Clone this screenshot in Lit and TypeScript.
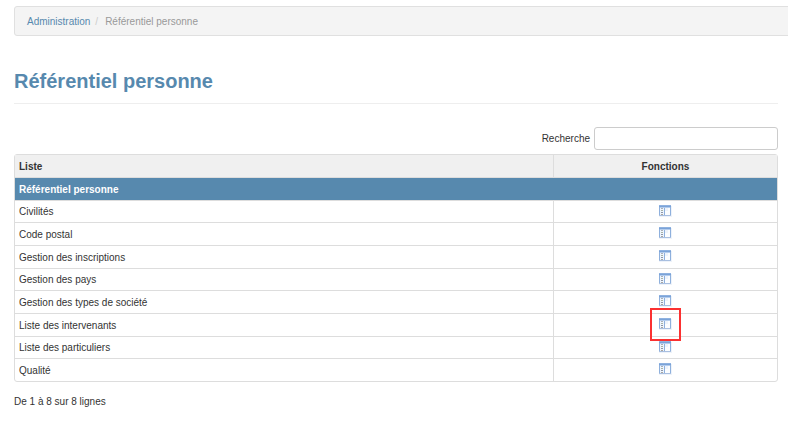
import { LitElement, html, css, nothing } from "lit";
import { customElement, state } from "lit/decorators.js";

interface Entry {
  name: string;
  marked?: boolean;
}

const ENTRIES: Entry[] = [
  { name: "Civilités" },
  { name: "Code postal" },
  { name: "Gestion des inscriptions" },
  { name: "Gestion des pays" },
  { name: "Gestion des types de société" },
  { name: "Liste des intervenants", marked: true },
  { name: "Liste des particuliers" },
  { name: "Qualité" },
];

@customElement("panel-icon")
export class PanelIcon extends LitElement {
  static styles = css`
    :host,
    svg {
      display: block;
    }
  `;

  render() {
    return html`
      <svg width="14" height="12" viewBox="0 0 14 12" aria-hidden="true" shape-rendering="crispEdges">
        <rect x="0" y="1" width="13" height="11" fill="#eef3fa" />
        <rect x="0" y="0" width="12" height="11" fill="#8eb0dd" />
        <rect x="0" y="0" width="12" height="1" fill="#8fb2e0" />
        <rect x="0" y="1" width="12" height="1" fill="#7ba3d8" />
        <rect x="1" y="2" width="10" height="1" fill="#b4cdee" />
        <rect x="1" y="3" width="4" height="7" fill="#edf4fc" />
        <rect x="2" y="3" width="2" height="1" fill="#a9afb8" />
        <rect x="2" y="5" width="2" height="1" fill="#a8b3a6" />
        <rect x="2" y="7" width="2" height="1" fill="#8d96a8" />
        <rect x="2" y="9" width="2" height="1" fill="#a9a6a0" />
        <rect x="6" y="3" width="5" height="7" fill="#fbfdff" />
        <rect x="6" y="3" width="3" height="3" fill="#edf3fb" />
        <rect x="0" y="10" width="12" height="1" fill="#a9bfe0" />
      </svg>
    `;
  }
}

@customElement("app-root")
export class AppRoot extends LitElement {
  static styles = css`
    :host {
      display: block;
      overflow-x: hidden;
      padding: 6px 10px 12px 14px;
      background: #fff;
      color: #333;
      font: 10px/14px "Liberation Sans", Arial, sans-serif;
    }
    .breadcrumb {
      display: flex;
      margin: 0 -20px 0 0;
      padding: 8px 12px 6px;
      list-style: none;
      background: #f4f4f4;
      border: 1px solid #e0e0e0;
      border-radius: 3px;
      color: #999;
    }
    .breadcrumb li + li::before {
      content: "/";
      padding: 0 7px 0 5px;
      color: #ccc;
    }
    .link {
      color: #5789ae;
      text-decoration: none;
    }
    .title {
      margin: 33px 0 23px;
      padding-bottom: 10px;
      border-bottom: 1px solid #eee;
      color: #5789ae;
      font-size: 20px;
      line-height: 24px;
    }
    .search {
      display: flex;
      justify-content: flex-end;
      align-items: center;
      gap: 4px;
      margin-bottom: 4px;
    }
    .field {
      box-sizing: border-box;
      width: 184px;
      height: 23px;
      padding: 2px 6px;
      border: 1px solid #ccc;
      border-radius: 3px;
      font: inherit;
      color: inherit;
    }
    .frame {
      border: 1px solid #ddd;
      border-radius: 3px;
    }
    .list {
      width: 100%;
      border-spacing: 0;
      table-layout: fixed;
    }
    th,
    td {
      box-sizing: border-box;
      height: 23px;
      padding: 1px 4px 0;
      text-align: left;
      border-bottom: 1px solid #ddd;
    }
    .row:nth-child(3n + 2) td {
      height: 22px;
    }
    .row:last-child td {
      height: 22px;
      border-bottom: 0;
    }
    .head th {
      padding-top: 2px;
      background: #f0f0f0;
    }
    .group th {
      background: #5789ae;
      color: #fff;
    }
    .actions {
      width: 224px;
      border-left: 1px solid #ddd;
    }
    .head .actions {
      text-align: center;
    }
    .row .actions {
      padding: 0 4px 2px;
    }
    .open {
      position: relative;
      display: block;
      margin: 0 auto;
      padding: 0;
      border: 0;
      background: none;
      cursor: pointer;
    }
    .mark {
      position: absolute;
      inset: -10px -8px -11px -9px;
      border: 2px solid #fb3131;
      z-index: 1;
    }
    .count {
      margin: 13px 0 0;
    }
  `;

  @state() private query = "";

  private onSearch(e: Event) {
    this.query = (e.target as HTMLInputElement).value;
  }

  render() {
    const q = this.query.toLowerCase();
    const rows = ENTRIES.filter((r) => r.name.toLowerCase().includes(q));
    return html`
      <nav aria-label="Fil d'Ariane">
        <ol class="breadcrumb">
          <li><a class="link" href="#">Administration</a></li>
          <li aria-current="page">Référentiel personne</li>
        </ol>
      </nav>
      <main>
        <h1 class="title">Référentiel personne</h1>
        <div class="search">
          <label for="q">Recherche</label>
          <input id="q" class="field" type="text" .value=${this.query} @input=${this.onSearch} />
        </div>
        <div class="frame">
          <table class="list">
            <thead>
              <tr class="head">
                <th scope="col">Liste</th>
                <th scope="col" class="actions">Fonctions</th>
              </tr>
            </thead>
            <tbody>
              <tr class="group">
                <th colspan="2" scope="colgroup">Référentiel personne</th>
              </tr>
              ${rows.map(
                (r) => html`
                  <tr class="row">
                    <td>${r.name}</td>
                    <td class="actions">
                      <button class="open" type="button" aria-label=${r.name}>
                        <panel-icon></panel-icon>
                        ${r.marked ? html`<span class="mark"></span>` : nothing}
                      </button>
                    </td>
                  </tr>
                `,
              )}
            </tbody>
          </table>
        </div>
        <p class="count">De 1 à ${rows.length} sur ${ENTRIES.length} lignes</p>
      </main>
    `;
  }
}
